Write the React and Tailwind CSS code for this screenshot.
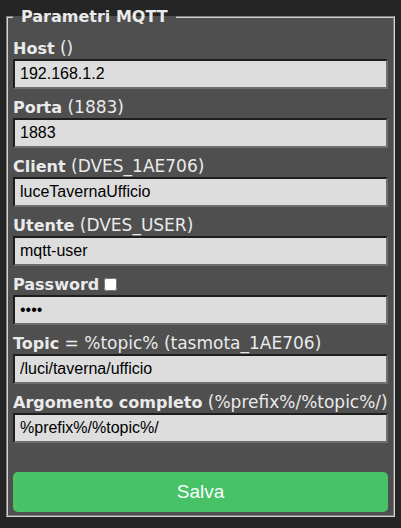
import React from 'react';

const fields = [
    { id: 'host', label: 'Host', hint: ' ()', value: '192.168.1.2' },
    { id: 'port', label: 'Porta', hint: ' (1883)', value: '1883' },
    { id: 'client', label: 'Client', hint: ' (DVES_1AE706)', value: 'luceTavernaUfficio' },
    { id: 'user', label: 'Utente', hint: ' (DVES_USER)', value: 'mqtt-user' },
    { id: 'password', label: 'Password', value: '1234', password: true },
    { id: 'topic', label: 'Topic', hint: ' = %topic% (tasmota_1AE706)', value: '/luci/taverna/ufficio' },
    { id: 'fulltopic', label: 'Argomento completo', hint: ' (%prefix%/%topic%/)', value: '%prefix%/%topic%/' },
];

const App = () => {
    return (
        <div className="min-h-screen bg-[#252525] pt-[7px] pl-[6px] pr-[6px] pb-[11px] font-['DejaVu_Sans',Verdana,sans-serif] text-[#eaeaea]">
            <fieldset className="bg-[#4f4f4f] border-2 [border-style:groove] border-[#d4d4d4] px-[5px] pt-[13px] pb-[3px]">
                <legend className="ml-0 px-[8px] text-[16px] leading-[19px] font-bold">Parametri MQTT</legend>

                <div className="flex flex-col gap-[9px]">
                    {fields.map((f) => (
                        <div key={f.id} className="flex flex-col">
                            <label htmlFor={f.id} className="block h-[20px] text-[16px] leading-[20px] whitespace-nowrap">
                                <b>{f.label}</b>
                                {f.hint && <span className="text-[17px] leading-[16px]">{f.hint}</span>}
                                {f.password && (
                                    <input type="checkbox" className="inline-block align-[-1px] ml-[5px] w-[13px] h-[13px]" />
                                )}
                            </label>
                            <input
                                id={f.id}
                                type={f.password ? 'password' : 'text'}
                                defaultValue={f.value}
                                className="w-full h-[30px] px-[5px] bg-[#dddddd] text-black text-[16px] font-['Liberation_Sans',Arial,sans-serif] border-2 border-t-[#1e1e1e] border-l-[#1e1e1e] border-r-[#6e6e6e] border-b-[#6e6e6e] outline-none"
                            />
                        </div>
                    ))}
                </div>

                <button className="mt-[29px] w-full h-[40px] rounded-[0.3rem] bg-[#47c266] text-[#faffff] text-[19px] font-['Liberation_Sans',Arial,sans-serif]">
                    Salva
                </button>
            </fieldset>
        </div>
    );
};

export default App;
